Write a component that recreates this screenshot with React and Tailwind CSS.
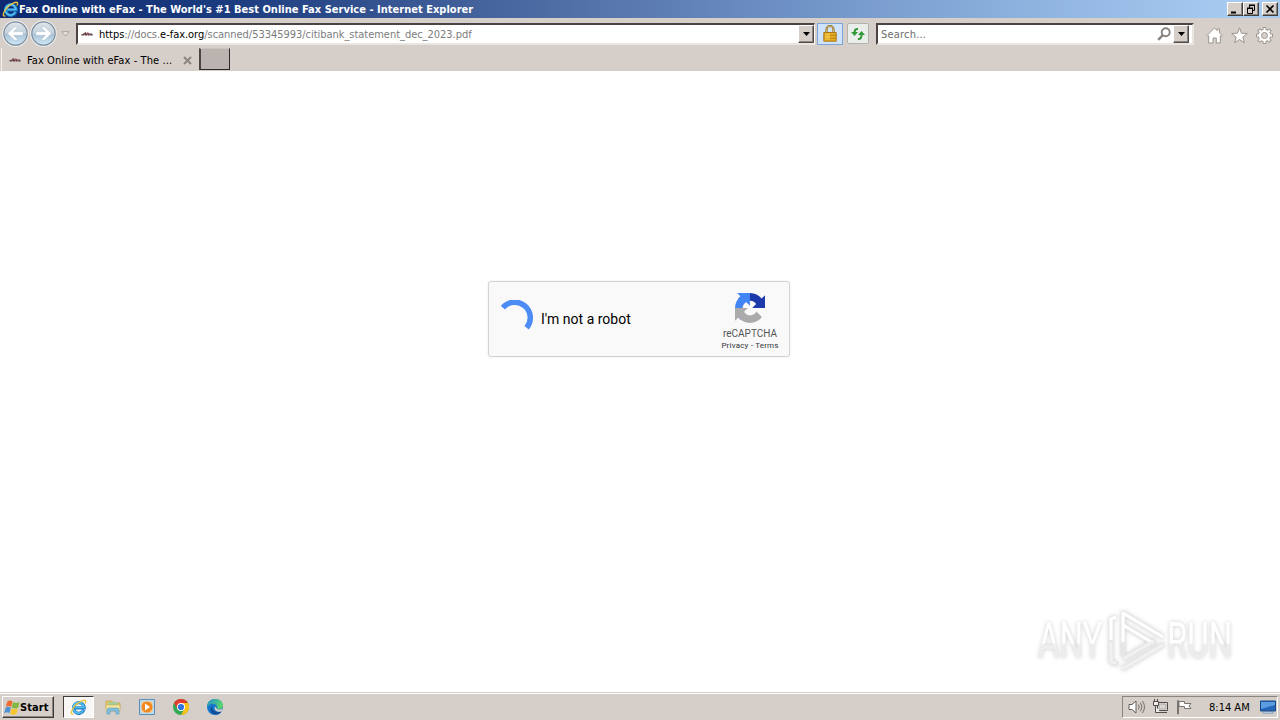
import React from "react";

const UI = "font-['DejaVu_Sans_Condensed','DejaVu_Sans',sans-serif] [font-stretch:condensed]";

function IELogo({ className }) {
  return (
    <svg viewBox="0 0 18 18" className={className} fill="none">
      <path d="M14.600 11.600A5.600 5.600 0 1 1 15 9.300H5.400" stroke="#1b7cc4" strokeWidth="3.400" />
      <path d="M14 11.800A5.600 5.600 0 1 1 14.600 9H5.600" stroke="#58bff0" strokeWidth="1.800" />
      <path d="M3.600 15.800C.2 17 .800 12.400 5 7.600 9.600 2.600 15.400.2 16.400 2c.4.900-.1 2-.6 2.800" stroke="#edc63c" strokeWidth="1.400" />
    </svg>
  );
}

function NavButton({ flip }) {
  return (
    <svg viewBox="0 0 27 27" className={flip ? "h-[27px] w-[27px] shrink-0 -scale-x-100" : "h-[27px] w-[27px] shrink-0"}>
      <defs>
        <linearGradient id={flip ? "navF" : "navB"} x1="0" y1="0" x2="0" y2="1">
          <stop offset="0" stopColor="#dfe6ec" />
          <stop offset=".48" stopColor="#c3d1de" />
          <stop offset=".54" stopColor="#abc2d6" />
          <stop offset="1" stopColor="#cdeaf8" />
        </linearGradient>
      </defs>
      <circle cx="13.500" cy="13.500" r="13.300" fill="#eef1f3" />
      <circle cx="13.500" cy="13.500" r="11.700" fill={flip ? "url(#navF)" : "url(#navB)"} stroke="#7e8c99" strokeWidth="1.200" />
      <path d="M5.500 13.500l7-6.600h3.600l-4.600 4.800h9.500v3.600h-9.500l4.600 4.800h-3.600z" fill="#fff" stroke="#b3c1ce" strokeWidth=".5" />
    </svg>
  );
}

function FaxIcon() {
  return (
    <svg viewBox="0 0 12 6" className="h-[6px] w-[12px] shrink-0">
      <path d="M0 4.300L3 2l1.200-.8L5 2l2-.8 1 1h3l.7 2.100z" fill="#8a7377" />
      <path d="M.5 3.800h2L5 1.500M4 3.900h2M7 3.900h1.500M9.500 3.900h2" stroke="#44292f" strokeWidth="1" fill="none" />
      <path d="M3 3h1M6 2.600h2" stroke="#b8414b" strokeWidth="1" />
    </svg>
  );
}

function WinButton({ children, className = "" }) {
  return (
    <div className={`flex h-[14px] w-[16px] items-center justify-center border border-b-[#404040] border-l-white border-r-[#404040] border-t-white bg-[#d6cec8] shadow-[inset_-1px_-1px_0_#8b8580] ${className}`}>
      <svg viewBox="0 0 12 10" className="h-[10px] w-[12px]" fill="none" stroke="#000">
        {children}
      </svg>
    </div>
  );
}

function DropButton() {
  return (
    <div className="flex h-[18px] w-[16px] shrink-0 items-center justify-center border border-b-[#504a48] border-l-white border-r-[#504a48] border-t-white bg-[#d6cec8] shadow-[inset_-1px_-1px_0_#8b8580]">
      <svg viewBox="0 0 7 4" className="h-[4px] w-[7px]"><path d="M0 0h7L3.500 4z" /></svg>
    </div>
  );
}

function TitleBar() {
  return (
    <header className="flex h-[18px] shrink-0 items-center bg-[linear-gradient(90deg,#0d2a70_0%,#1c3c80_18%,#45639c_38%,#6f92c6_62%,#8db2de_80%,#a6caf0_96%)] pl-[2px] pr-[2px]">
      <IELogo className="h-[17px] w-[17px] shrink-0" />
      <h1 className="flex-1 whitespace-nowrap pt-px font-['DejaVu_Sans_Condensed','DejaVu_Sans',sans-serif] text-[11px] font-bold leading-[17px] tracking-[0.018px] text-white [font-stretch:condensed]">
        Fax Online with eFax - The World&apos;s #1 Best Online Fax Service - Internet Explorer
      </h1>
      <WinButton><path d="M2 8.500h5" strokeWidth="2" /></WinButton>
      <WinButton>
        <path d="M4 1.500h6M4.500 1v3M9.500 1v5.500H8M2 4.500h6M2.500 4v5.500h5V4" />
        <path d="M4 1h6M2 4h6" />
      </WinButton>
      <WinButton className="ml-[3px]"><path d="M2.500 1.500l7 7M9.500 1.500l-7 7" strokeWidth="1.700" /></WinButton>
    </header>
  );
}

function Toolbar() {
  return (
    <div className="flex h-[30px] shrink-0 items-center border-t border-[#d4d0c8]">
      <div className="ml-[2px] flex gap-[1px]">
        <NavButton />
        <NavButton flip />
      </div>
      <svg viewBox="0 0 9 6" className="ml-[4px] h-[6px] w-[9px]"><path d="M.8.700h7.400L4.500 5z" fill="#e8e4df" stroke="#aaa39c" /></svg>
      <div className={`ml-[6px] flex h-[22px] w-[739px] shrink-0 items-center border-b-2 border-l-2 border-r border-t-2 border-b-[#e9e5e1] border-l-[#4b4344] border-r-white border-t-[#4b4344] bg-white pl-[3px] ${UI}`}>
        <FaxIcon />
        <span className="ml-[6px] flex-1 whitespace-nowrap pt-px text-[11px] leading-[17px] tracking-[-0.035px] text-[#7c7c7c]">
          <span className="text-black">https</span>://docs.<span className="text-black">e-fax.org</span>/scanned/53345993/citibank_statement_dec_2023.pdf
        </span>
        <DropButton />
      </div>
      <div className="ml-[2px] flex h-[22px] w-[26px] shrink-0 items-center justify-center border border-[#7ca6da] bg-[#cfe3fa]">
        <svg viewBox="0 0 14 17" className="h-[17px] w-[14px]">
          <path d="M3.500 8V4.500a3.500 3.500 0 0 1 7 0V8" fill="none" stroke="#8d6d32" strokeWidth="2.200" />
          <path d="M3.500 8V4.500a3.500 3.500 0 0 1 7 0V8" fill="none" stroke="#e5c66c" strokeWidth=".8" />
          <path d="M.8 7.500h12.400v8.700H.8z" fill="#e9ad20" stroke="#a8771c" />
          <path d="M1 10.300h12M1 13.200h12" stroke="#b98316" />
          <path d="M2 8.500h5v6H2z" fill="#ffdd62" opacity=".5" />
        </svg>
      </div>
      <div className="ml-[4px] flex h-[21px] w-[22px] shrink-0 items-center justify-center rounded-[2px] border border-[#b3b3ae] bg-[#e9eeea]">
        <svg viewBox="0 0 16 14" className="h-[14px] w-[16px]" fill="none" stroke="#2f9a37" strokeWidth="2">
          <path d="M8 2Q4.500 1.500 4.500 6M8 12q3.500.500 3.500-4" />
          <path d="M1 5h7L4.500 9zM8 8h7l-3.500-4z" fill="#2f9a37" stroke="none" />
        </svg>
      </div>
      <div className={`ml-[7px] flex h-[22px] w-[318px] shrink-0 items-center border-b-2 border-l-2 border-r-2 border-t-2 border-b-[#e9e5e1] border-l-[#4b4344] border-r-[#e9e5e1] border-t-[#4b4344] bg-white pl-[3px] ${UI}`}>
        <span className="flex-1 pt-px text-[11px] leading-[17px] tracking-[0.200px] text-[#6d6d6d]">Search...</span>
        <svg viewBox="0 0 14 14" className="mr-[2px] h-[14px] w-[14px]" fill="none" stroke="#89837e">
          <circle cx="8.700" cy="5.300" r="4" strokeWidth="1.900" />
          <path d="M5.800 8.200L1.200 12.800" strokeWidth="2.400" />
        </svg>
        <DropButton />
        <div className="w-[3px]" />
      </div>
      <div className="ml-[12px] flex items-center gap-[8px] pt-[3px]">
        <svg viewBox="0 0 17 17" className="h-[17px] w-[17px]" fill="#fff" stroke="#9b958f" strokeLinejoin="round">
          <path d="M.8 8.500L8.500 1l2.700 2.600V2h2.300v3.900l2.700 2.600-1 1-.9-.8V16h-4v-5H7v5H2.700V8.700l-.9.8z" />
        </svg>
        <svg viewBox="0 0 17 17" className="h-[17px] w-[17px]" fill="#fff" stroke="#9b958f" strokeLinejoin="round">
          <path d="M8.500.8l2 5.400 5.800.3-4.500 3.600 1.500 5.600-4.800-3.200-4.800 3.200 1.500-5.600L.7 6.500l5.800-.3z" />
        </svg>
        <svg viewBox="0 0 17 17" className="h-[17px] w-[17px]" fill="none">
          <path d="M8.500 0v17M0 8.500h17M2.500 2.500l12 12M14.500 2.500l-12 12" stroke="#9b958f" strokeWidth="3.600" />
          <circle cx="8.500" cy="8.500" r="4.700" stroke="#9b958f" strokeWidth="4" />
          <path d="M8.500 1v15M1 8.500h15M3.200 3.200l10.600 10.600M13.800 3.200L3.200 13.800" stroke="#fff" strokeWidth="2" />
          <circle cx="8.500" cy="8.500" r="4.500" stroke="#fff" strokeWidth="2.400" />
          <circle cx="8.500" cy="8.500" r="3" fill="#d6cec8" stroke="#9b958f" strokeWidth=".9" />
        </svg>
      </div>
    </div>
  );
}

function TabStrip() {
  return (
    <nav className="flex h-[23px] shrink-0 items-start">
      <div className={`ml-[1px] flex h-[23px] w-[197px] items-center border-l border-[#f6f3f0] pl-[7px] ${UI}`}>
        <FaxIcon />
        <span className="ml-[6px] w-[150px] whitespace-nowrap pt-[2px] text-[11px] leading-[21px] tracking-[0.090px] text-black">Fax Online with eFax - The ...</span>
        <svg viewBox="0 0 9 9" className="ml-[6px] mt-px h-[9px] w-[9px]"><path d="M1 1l7 7M8 1L1 8" stroke="#8d8681" strokeWidth="2" /></svg>
      </div>
      <div className="ml-[1px] h-[22px] w-[31px] border border-l-2 border-b-[#2c2828] border-l-[#4b4344] border-r-[#2c2828] border-t-[#c9c2bd] bg-[#bbb3af]" />
    </nav>
  );
}

function RecaptchaLogo() {
  return (
    <svg viewBox="0 0 64 64" className="h-[30px] w-[30px]">
      <path d="M64 31.955l-.033-1.370V4.687l-7.160 7.160C50.948 4.674 42.033.093 32.050.093c-10.400 0-19.622 4.960-25.458 12.640l11.736 11.860a15.550 15.550 0 0 1 4.754-5.334c2.050-1.600 4.952-2.906 8.968-2.906.485 0 .860.057 1.135.163 4.976.393 9.288 3.140 11.828 7.124l-8.307 8.307L64 31.953" fill="#1c3aa9" />
      <path d="M31.862.094l-1.370.033H4.594l7.160 7.160C4.580 13.147 0 22.060 0 32.046c0 10.400 4.960 19.622 12.640 25.458L24.500 45.768a15.550 15.550 0 0 1-5.334-4.754c-1.600-2.050-2.906-4.952-2.906-8.968 0-.485.057-.860.163-1.135.393-4.976 3.140-9.288 7.124-11.828l8.307 8.307L31.860.095" fill="#4285f4" />
      <path d="M.001 32.045l.033 1.370v25.898l7.160-7.160c5.860 7.173 14.774 11.754 24.760 11.754 10.400 0 19.622-4.960 25.458-12.640l-11.736-11.860a15.550 15.550 0 0 1-4.754 5.334c-2.050 1.600-4.952 2.906-8.968 2.906-.485 0-.860-.057-1.135-.163-4.976-.393-9.288-3.140-11.828-7.124l8.307-8.307-27.297.001" fill="#ababab" />
    </svg>
  );
}

function Captcha() {
  return (
    <section className="mt-[210px] flex h-[76px] w-[302px] rounded-[3px] border border-[#d3d3d3] bg-[#f9f9f9] font-[Roboto,sans-serif] shadow-[0_0_3px_rgba(0,0,0,0.08)]">
      <svg viewBox="0 0 34 34" className="ml-[11px] mt-[18px] h-[34px] w-[34px] shrink-0">
        <path d="M2.900 7.700A15 15 0 0 1 26.600 27.800" fill="none" stroke="#4d8cf5" strokeWidth="5.500" />
      </svg>
      <span className="ml-[7px] mt-[27px] flex-1 whitespace-nowrap text-[14px] leading-[20px] text-black">I&apos;m not a robot</span>
      <div className="mr-[8px] flex w-[62px] flex-col items-center pt-[11px] text-[#555]">
        <RecaptchaLogo />
        <span className="mt-[5px] text-[10px] leading-[12px]">reCAPTCHA</span>
        <span className="whitespace-nowrap text-[8px] leading-[11px] tracking-[0.180px] text-[#333]">Privacy&nbsp;-&nbsp;Terms</span>
      </div>
    </section>
  );
}

function Watermark() {
  return (
    <svg viewBox="0 0 204 66" className="absolute bottom-[18px] right-[39px] h-[66px] w-[204px] drop-shadow-[0_0_2px_rgba(0,0,0,0.20)]">
      <defs>
        <linearGradient id="wm" x1="0" y1="0" x2="0" y2="1">
          <stop offset="0" stopColor="#fff" />
          <stop offset=".53" stopColor="#fff" />
          <stop offset=".57" stopColor="#ededed" />
          <stop offset="1" stopColor="#ededed" />
        </linearGradient>
      </defs>
      <g fill="url(#wm)" fontFamily="Roboto, sans-serif" fontWeight="400" fontSize="50">
        <text transform="translate(1 50) scale(.66 1)">ANY</text>
        <text transform="translate(130 50) scale(.66 1)">RUN</text>
      </g>
      <g fill="none" strokeLinejoin="round">
        <path d="M79 9l-5 2v43l7 2M86 48V5l40 24M86 17l32 19M86 51l32-19M85 61l42-25" stroke="#e6e6e6" strokeWidth="4.500" />
        <path d="M79 9l-5 2v21M86 34V5l40 24M86 17l30 18" stroke="#fff" strokeWidth="3.200" />
        <path d="M85 61l41-24M86 51l31-18M74 34v20l5 1" stroke="#f1f1f1" strokeWidth="3" />
      </g>
    </svg>
  );
}

function Taskbar() {
  return (
    <footer className={`flex h-[28px] shrink-0 items-center border-t border-[#d4d0c8] bg-[#d6cec8] shadow-[inset_0_1px_0_#fff] ${UI}`}>
      <button className="ml-[2px] mt-px flex h-[22px] w-[52px] shrink-0 items-center border border-b-[#403c3a] border-l-white border-r-[#403c3a] border-t-white bg-[#d6cec8] pl-px shadow-[inset_-1px_-1px_0_#8b8580]">
        <svg viewBox="0 0 16 15" className="h-[15px] w-[16px] shrink-0">
          <path d="M3.400 1.500c2-1.300 3.500-1.300 5.200 0L7.100 7c-1.500-1.200-3-1.200-5.200 0z" fill="#ef6b2d" />
          <path d="M9.200 2c2 1.300 4 1.100 6.500 0L14.200 7.500c-2 1.300-4 1.300-6.500 0z" fill="#82b841" />
          <path d="M1.700 7.700c2-1.200 3.500-1.200 5.200 0L5.400 13.200c-1.500-1.200-3-1.200-5.200 0z" fill="#4d92d6" />
          <path d="M7.500 8.200c2 1.300 4 1.300 6.500 0L12.500 13.700c-2 1.300-4 1.300-6.500 0z" fill="#f7c62f" />
        </svg>
        <span className="pt-px text-[11px] font-bold leading-[19px] tracking-[0.080px] text-black">Start</span>
      </button>
      <div className="ml-[9px] mt-px flex h-[22px] w-[31px] shrink-0 items-center justify-center border border-b-white border-l-[#403c3a] border-r-white border-t-[#403c3a] bg-[#f8f7f5]">
        <IELogo className="h-[17px] w-[17px]" />
      </div>
      <svg viewBox="0 0 16 16" className="ml-[11px] mt-px h-[16px] w-[16px]">
        <path d="M1 2h6l1 2h7v5H1z" fill="#e8c763" stroke="#b99c4b" strokeWidth=".6" />
        <path d="M3 3.500h10V8H3z" fill="#9ccf98" />
        <path d="M1 6h14v6H1z" fill="#f7e69b" stroke="#c7aa58" strokeWidth=".6" />
        <path d="M2 15v-4q0-2 2-2h8q2 0 2 2v4h-3v-3H5v3z" fill="#81bddd" stroke="#5b9dc4" strokeWidth=".6" />
      </svg>
      <svg viewBox="0 0 16 16" className="ml-[18px] mt-px h-[16px] w-[16px]">
        <path d="M.5.500h15v15H.5z" fill="#b9dbf2" stroke="#5c8fb5" />
        <path d="M2.500 2.500h11v11h-11z" fill="#f6c98e" />
        <circle cx="8" cy="8" r="5.500" fill="#f08a20" />
        <path d="M6 4.500l5 3.500-5 3.500z" fill="#fff" />
      </svg>
      <svg viewBox="0 0 16 16" className="ml-[18px] mt-px h-[16px] w-[16px]">
        <circle cx="8" cy="8" r="8" fill="#34a853" />
        <path d="M8 8L1.070 4A8 8 0 0 1 14.930 4z" fill="#e33b2e" />
        <path d="M8 4h6.930A8 8 0 0 1 8 16l3.460-6z" fill="#fbc116" />
        <path d="M1.070 4L4.540 10 8 8V4z" fill="#e33b2e" />
        <circle cx="8" cy="8" r="4" fill="#fff" />
        <circle cx="8" cy="8" r="3.100" fill="#2f73e0" />
      </svg>
      <svg viewBox="0 0 16 16" className="ml-[18px] mt-px h-[16px] w-[16px]">
        <defs>
          <linearGradient id="edge" x1="0" y1="0" x2="1" y2=".5"><stop offset="0" stopColor="#2191cf" /><stop offset="1" stopColor="#5bd56a" /></linearGradient>
        </defs>
        <circle cx="8" cy="8" r="8" fill="#1678cc" />
        <path d="M0 8C0-2.500 16-2.500 16 6.500c0 3.500-4 4.300-6 3C11.500 6 7 3.600 3.600 5.200 1.400 6.200.3 7 0 8z" fill="url(#edge)" />
        <path d="M6 7c-2 4 2 7 8.500 5.500C11 17.500 4 16 3.500 11.500 3.300 9.500 4 8 6 7z" fill="#124f9a" />
        <path d="M9.500 9.500c1.500 1.500 4 1.500 6.500-.5l-1.500 3.500C10 13.800 6.500 11 8 7.800c1 .2 1.500.9 1.500 1.700z" fill="#d6cec8" />
      </svg>
      <div className="ml-auto mr-[2px] mt-px flex h-[22px] w-[156px] items-center border border-b-white border-l-[#8b8580] border-r-white border-t-[#8b8580] pl-[5px]">
        <svg viewBox="0 0 18 16" className="h-[16px] w-[18px] shrink-0" fill="#fff" stroke="#625d59" strokeWidth="1">
          <path d="M1 5.500h3L8 2v12l-4-3.500H1z" />
          <path d="M10.500 5.500q1.500 2.500 0 5M12.500 3.700q3 4.300 0 8.600M14.500 2q4 6 0 12" fill="none" stroke="#77716c" />
        </svg>
        <svg viewBox="0 0 17 16" className="ml-[6px] h-[16px] w-[17px] shrink-0" fill="#efecea" stroke="#514d4a">
          <path d="M5.500 3.500h10v8h-10zM8 13.500h7" />
          <path d="M7 5h7v5H7z" fill="#d8d5d2" stroke="#aaa5a0" />
          <path d="M1.500 2.500h5v4h-5zM2.500 0v2M5.500 0v2M3.500 7v6.500h5" />
        </svg>
        <svg viewBox="0 0 17 16" className="ml-[7px] h-[16px] w-[17px] shrink-0" fill="#fff" stroke="#7b756f">
          <path d="M1.500 1.500h1V15h-1zM3 2.500h5.500v2H15L13 7l2 2.500H8.500v-2H3z" />
        </svg>
        <span className="ml-[16px] w-[42px] whitespace-nowrap pt-px text-[11px] leading-[19px] text-black">8:14 AM</span>
        <svg viewBox="0 0 16 14" className="ml-[9px] h-[14px] w-[16px] shrink-0">
          <path d="M.5 1h15v10H.5z" fill="#2566b8" stroke="#174887" />
          <path d="M1 2h14v3L1 9z" fill="#5b9de0" />
          <path d="M3 12h10v1.500H3z" fill="#c8dbec" stroke="#6587ab" strokeWidth=".5" />
        </svg>
      </div>
    </footer>
  );
}

export default function App() {
  return (
    <div className="flex h-[720px] w-[1280px] flex-col overflow-hidden bg-[#d6cec8]">
      <TitleBar />
      <Toolbar />
      <TabStrip />
      <main className="relative flex flex-1 items-start justify-center bg-white pr-[2px]">
        <Captcha />
        <Watermark />
      </main>
      <Taskbar />
    </div>
  );
}
